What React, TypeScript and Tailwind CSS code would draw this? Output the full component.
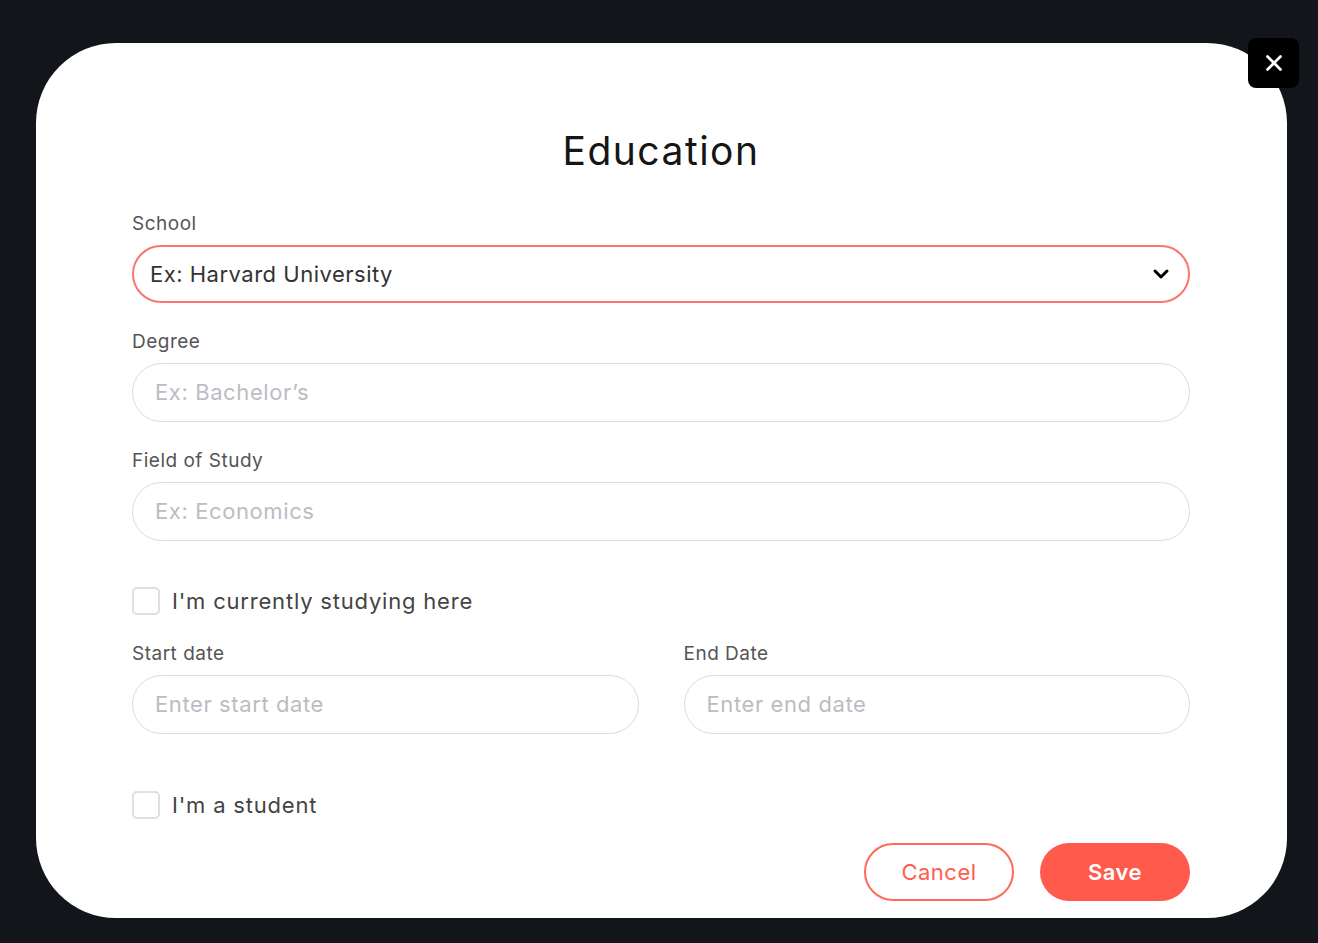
import { ChevronDown, X } from "lucide-react";

const font = { fontFamily: "Inter, 'Open Sans', sans-serif" };

function Field({ label, placeholder }: { label: string; placeholder: string }) {
  return (
    <div className="flex flex-col">
      <label className="text-[19px] leading-[22px] tracking-[0.5px] text-[#555] mb-[10px]">{label}</label>
      <div className="h-[59px] rounded-full border border-[#dcdce0] flex items-center px-[22px]">
        <span className="text-[22px] tracking-[0.6px] text-[#bcbcc3]">{placeholder}</span>
      </div>
    </div>
  );
}

function Check({ label }: { label: string }) {
  return (
    <div className="flex items-center gap-[12px] h-[28px]">
      <div className="w-[28px] h-[28px] rounded-[5px] border-2 border-[#dedee3]" />
      <span className="text-[22px] leading-[28px] tracking-[0.8px] text-[#444]">{label}</span>
    </div>
  );
}

export default function App() {
  return (
    <div className="min-h-screen w-full bg-[#121519] pt-[43px] pl-[36px]" style={font}>
      <div className="relative w-[1251px] h-[875px] bg-white rounded-[80px] pl-[96px] pr-[97px] pt-[84px]">
        <button className="absolute -top-[5px] -right-[12px] w-[51px] h-[50px] rounded-[8px] bg-black flex items-center justify-center">
          <X className="w-[26px] h-[26px] text-white" strokeWidth={2.5} />
        </button>

        <h2 className="text-center text-[39px] leading-[48px] text-[#151515] tracking-[1.5px]">Education</h2>

        <div className="mt-[38px] flex flex-col">
          <label className="text-[19px] leading-[22px] tracking-[0.5px] text-[#555] mb-[10px]">School</label>
          <div className="h-[58px] rounded-full border-2 border-[#f8766a] flex items-center justify-between pl-[16px] pr-[15px]">
            <span className="text-[22px] tracking-[0.5px] text-[#333]">Ex: Harvard University</span>
            <ChevronDown className="w-[24px] h-[24px] text-black" strokeWidth={3} />
          </div>
        </div>

        <div className="mt-[28px]">
          <Field label="Degree" placeholder="Ex: Bachelor’s" />
        </div>
        <div className="mt-[28px]">
          <Field label="Field of Study" placeholder="Ex: Economics" />
        </div>

        <div className="mt-[46px]">
          <Check label="I'm currently studying here" />
        </div>

        <div className="mt-[28px] grid grid-cols-2 gap-[45px]">
          <Field label="Start date" placeholder="Enter start date" />
          <Field label="End Date" placeholder="Enter end date" />
        </div>

        <div className="mt-[57px]">
          <Check label="I'm a student" />
        </div>

        <div className="mt-[24px] flex justify-end gap-[26px]">
          <button className="w-[150px] h-[58px] rounded-full border-2 border-[#ff6a5b] text-[#ff5c4d] text-[22px] tracking-[0.5px]">
            Cancel
          </button>
          <button className="w-[150px] h-[58px] rounded-full bg-[#ff5a4b] text-white text-[22px] tracking-[0.5px] font-semibold">
            Save
          </button>
        </div>
      </div>
    </div>
  );
}
